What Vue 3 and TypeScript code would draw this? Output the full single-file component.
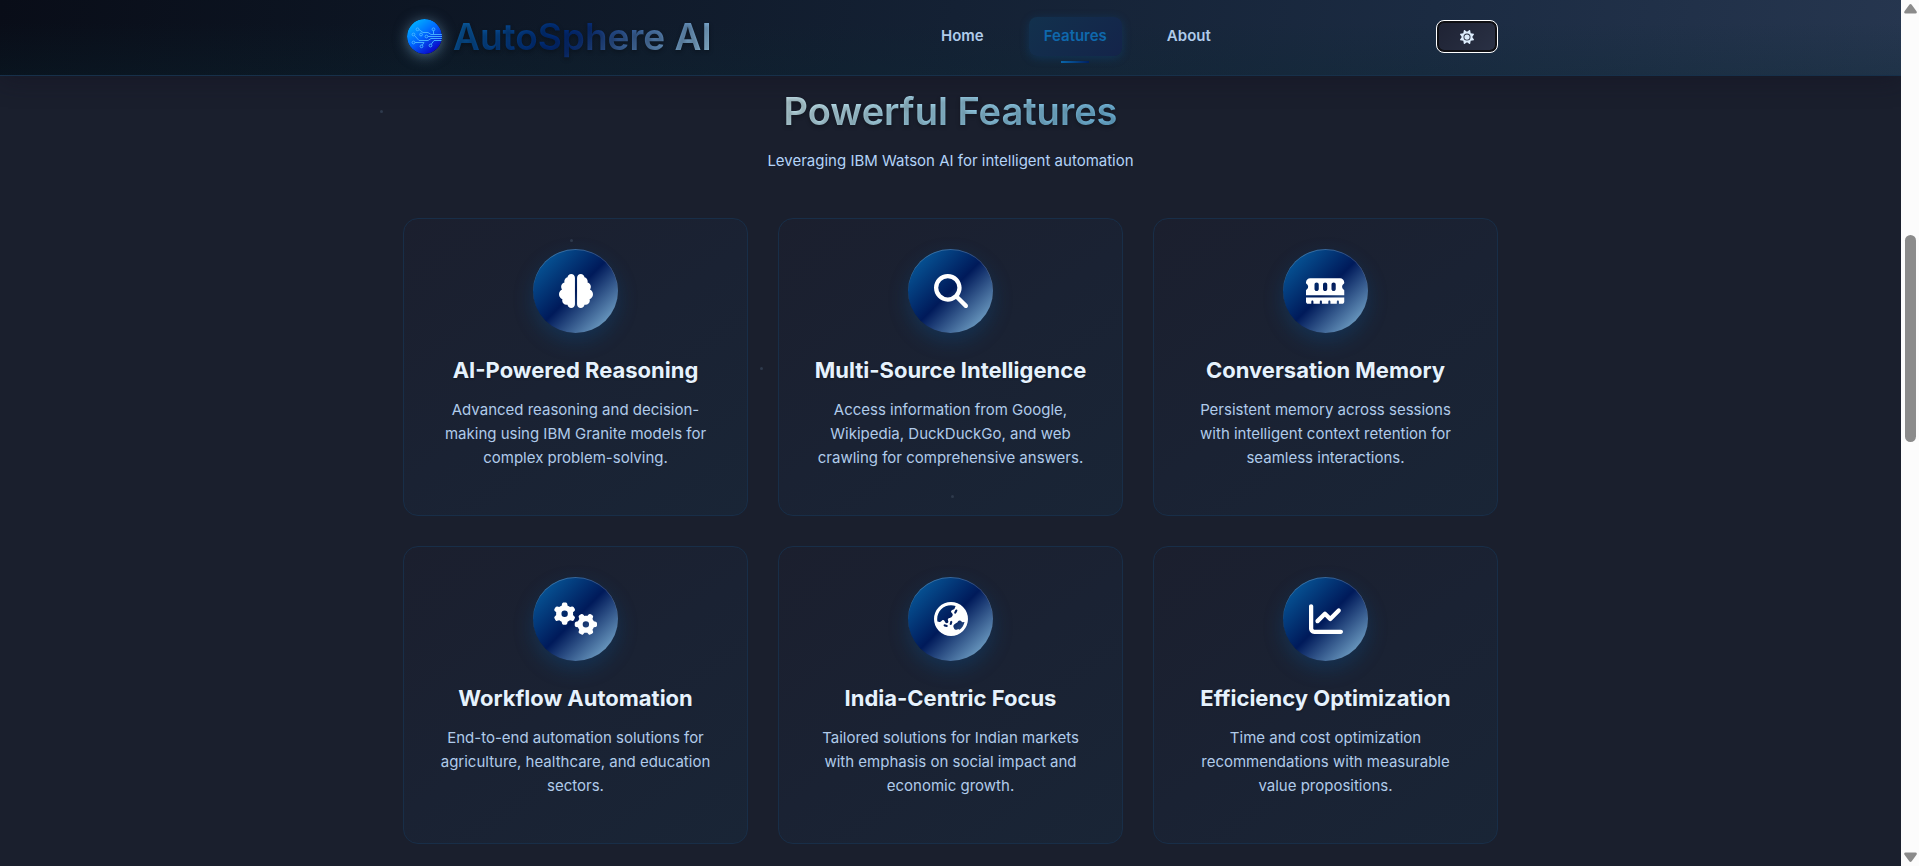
<script setup lang="ts">
import { ref } from 'vue'

interface Shape {
  d: string
  transform?: string
}

interface Feature {
  title: string
  text: string
  viewBox: string
  shapes: Shape[]
}

const gear =
  'M308.5 135.3c7.1-6.3 9.9-16.2 6.2-25c-2.3-5.3-4.8-10.5-7.6-15.5L304 89.4c-3-5-6.3-9.9-9.8-14.6c-5.7-7.6-15.7-10.1-24.7-7.1l-28.2 9.3c-10.7-8.8-23-16-36.2-20.9L199 27.1c-1.9-9.3-9.1-16.7-18.5-17.8C173.9 8.4 167.2 8 160.4 8h-.7c-6.8 0-13.5 .4-20.1 1.2c-9.4 1.1-16.6 8.6-18.5 17.8L115 56.1c-13.3 5-25.5 12.1-36.2 20.9L50.5 67.8c-9-3-19-.5-24.7 7.1c-3.5 4.7-6.8 9.6-9.9 14.6l-3 5.3c-2.8 5-5.3 10.2-7.6 15.6c-3.7 8.7-.9 18.6 6.2 25l22.2 19.8C32.6 161.9 32 168.9 32 176s.6 14.1 1.7 20.9L11.5 216.7c-7.1 6.3-9.9 16.2-6.2 25c2.3 5.3 4.8 10.5 7.6 15.6l3 5.2c3 5.1 6.3 9.9 9.9 14.6c5.7 7.6 15.7 10.1 24.7 7.1l28.2-9.3c10.7 8.8 23 16 36.2 20.9l6.1 29.1c1.9 9.3 9.1 16.7 18.5 17.8c6.7 .8 13.5 1.2 20.4 1.2s13.7-.4 20.4-1.2c9.4-1.1 16.6-8.6 18.5-17.8l6.1-29.1c13.3-5 25.5-12.1 36.2-20.9l28.2 9.3c9 3 19 .5 24.7-7.1c3.5-4.7 6.8-9.5 9.8-14.6l3.1-5.4c2.8-5 5.3-10.2 7.6-15.5c3.7-8.7 .9-18.6-6.2-25l-22.2-19.8c1.1-6.8 1.7-13.8 1.7-20.9s-.6-14.1-1.7-20.9l22.2-19.8zM112 176a48 48 0 1 1 96 0 48 48 0 1 1 -96 0z'

const features: Feature[] = [
  {
    title: 'AI-Powered Reasoning',
    text: 'Advanced reasoning and decision-making using IBM Granite models for complex problem-solving.',
    viewBox: '0 0 512 512',
    shapes: [
      {
        d: 'M184 0c30.9 0 56 25.1 56 56V456c0 30.9-25.1 56-56 56c-28.9 0-52.7-21.9-55.7-50.1c-5.2 1.4-10.7 2.1-16.3 2.1c-35.3 0-64-28.7-64-64c0-7.4 1.3-14.6 3.6-21.2C21.4 367.4 0 338.2 0 304c0-31.9 18.7-59.5 45.8-72.3C37.1 220.8 32 207 32 192c0-30.7 21.6-56.3 50.4-62.6C80.8 123.9 80 118 80 112c0-29.9 20.6-55.1 48.3-62.1C131.3 21.9 155.1 0 184 0zM328 0c28.9 0 52.6 21.9 55.7 49.9c27.8 7 48.3 32.1 48.3 62.1c0 6-.8 11.9-2.4 17.4c28.8 6.2 50.4 31.9 50.4 62.6c0 15-5.1 28.8-13.8 39.7C493.3 244.5 512 272.1 512 304c0 34.2-21.4 63.4-51.6 74.8c2.3 6.6 3.6 13.8 3.6 21.2c0 35.3-28.7 64-64 64c-5.6 0-11.1-.7-16.3-2.1c-3 28.2-26.8 50.1-55.7 50.1c-30.9 0-56-25.1-56-56V56c0-30.9 25.1-56 56-56z',
      },
    ],
  },
  {
    title: 'Multi-Source Intelligence',
    text: 'Access information from Google, Wikipedia, DuckDuckGo, and web crawling for comprehensive answers.',
    viewBox: '0 0 512 512',
    shapes: [
      {
        d: 'M416 208c0 45.9-14.9 88.3-40 122.7L502.6 457.4c12.5 12.5 12.5 32.8 0 45.3s-32.8 12.5-45.3 0L330.7 376c-34.4 25.2-76.8 40-122.7 40C93.1 416 0 322.9 0 208S93.1 0 208 0S416 93.1 416 208zM208 352a144 144 0 1 0 0-288 144 144 0 1 0 0 288z',
      },
    ],
  },
  {
    title: 'Conversation Memory',
    text: 'Persistent memory across sessions with intelligent context retention for seamless interactions.',
    viewBox: '0 0 576 512',
    shapes: [
      {
        d: 'M64 64C28.7 64 0 92.7 0 128v7.4c0 6.8 4.4 12.6 10.1 16.3C23.3 160.3 32 175.1 32 192s-8.7 31.7-21.9 40.3C4.4 236 0 241.8 0 248.6V320H576V248.6c0-6.8-4.4-12.6-10.1-16.3C552.7 223.7 544 208.9 544 192s8.7-31.7 21.9-40.3c5.7-3.7 10.1-9.5 10.1-16.3V128c0-35.3-28.7-64-64-64H64zM576 352H0v64c0 17.7 14.3 32 32 32H80V416c0-8.8 7.2-16 16-16s16 7.2 16 16v32h96V416c0-8.8 7.2-16 16-16s16 7.2 16 16v32h96V416c0-8.8 7.2-16 16-16s16 7.2 16 16v32h96V416c0-8.8 7.2-16 16-16s16 7.2 16 16v32h48c17.7 0 32-14.3 32-32V352zM192 160v64c0 17.7-14.3 32-32 32s-32-14.3-32-32V160c0-17.7 14.3-32 32-32s32 14.3 32 32zm128 0v64c0 17.7-14.3 32-32 32s-32-14.3-32-32V160c0-17.7 14.3-32 32-32s32 14.3 32 32zm128 0v64c0 17.7-14.3 32-32 32s-32-14.3-32-32V160c0-17.7 14.3-32 32-32s32 14.3 32 32z',
      },
    ],
  },
  {
    title: 'Workflow Automation',
    text: 'End-to-end automation solutions for agriculture, healthcare, and education sectors.',
    viewBox: '0 0 640 512',
    shapes: [{ d: gear }, { d: gear, transform: 'translate(480 336) rotate(90) translate(-160 -176)' }],
  },
  {
    title: 'India-Centric Focus',
    text: 'Tailored solutions for Indian markets with emphasis on social impact and economic growth.',
    viewBox: '0 0 512 512',
    shapes: [
      {
        d: 'M51.7 295.1l31.7 6.3c7.9 1.6 16-.9 21.7-6.6l15.4-15.4c11.6-11.6 31.1-8.4 38.4 6.2l9.3 18.5c4.8 9.6 14.6 15.7 25.4 15.7c15.2 0 26.1-14.6 21.7-29.2l-6-19.9c-4.6-15.4 6.9-30.9 23-30.9h2.3c13.4 0 25.9-6.7 33.3-17.8l10.7-16.1c5.6-8.5 5.3-19.6-.8-27.7l-16.1-21.5c-10.3-13.7-3.3-33.5 13.4-37.7l17-4.3c7.5-1.9 13.6-7.2 16.5-14.4l16.4-40.9C303.4 52.1 280.2 48 256 48C141.1 48 48 141.1 48 256c0 13.4 1.3 26.5 3.7 39.1zm407.7 4.6c-3-.3-6-.1-9 .8l-15.8 4.4c-6.7 1.9-13.8-.9-17.5-6.7l-2-3.1c-6-9.4-16.4-15.1-27.6-15.1s-21.6 5.7-27.6 15.1l-6.1 9.5c-1.4 2.2-3.4 4.1-5.7 5.3L312 330.1c-18.1 10.1-25.5 32.4-17 51.3l5.5 12.4c8.6 19.2 30.7 28.5 50.5 21.1l2.6-1c10-3.7 21.3-2.2 29.9 4.1l1.5 1.1c37.2-29.5 64.1-71.4 74.4-119.5zM0 256a256 256 0 1 1 512 0A256 256 0 1 1 0 256zm144.5 92.1c-2.1 8.6 3.1 17.3 11.6 19.4l32 8c8.6 2.1 17.3-3.1 19.4-11.6s-3.1-17.3-11.6-19.4l-32-8c-8.6-2.1-17.3 3.1-19.4 11.6zm92-20c-2.1 8.6 3.1 17.3 11.6 19.4s17.3-3.1 19.4-11.6l8-32c2.1-8.6-3.1-17.3-11.6-19.4s-17.3 3.1-19.4 11.6l-8 32zM343.2 113.7c-7.9-4-17.5-.7-21.5 7.2l-16 32c-4 7.9-.7 17.5 7.2 21.5s17.5 .7 21.5-7.2l16-32c4-7.9 .7-17.5-7.2-21.5z',
      },
    ],
  },
  {
    title: 'Efficiency Optimization',
    text: 'Time and cost optimization recommendations with measurable value propositions.',
    viewBox: '0 0 512 512',
    shapes: [
      {
        d: 'M64 64c0-17.7-14.3-32-32-32S0 46.3 0 64V400c0 44.2 35.8 80 80 80H480c17.7 0 32-14.3 32-32s-14.3-32-32-32H80c-8.8 0-16-7.2-16-16V64zm406.6 86.6c12.5-12.5 12.5-32.8 0-45.3s-32.8-12.5-45.3 0L320 210.7l-57.4-57.4c-12.5-12.5-32.8-12.5-45.3 0l-112 112c-12.5 12.5-12.5 32.8 0 45.3s32.8 12.5 45.3 0L240 221.3l57.4 57.4c12.5 12.5 32.8 12.5 45.3 0l128-128z',
      },
    ],
  },
]

const links = ['Home', 'Features', 'About']
const active = ref('Features')
</script>

<template>
  <div class="window">
    <div class="page">
      <header class="header">
        <div class="container bar">
          <a class="brand" href="#home">
            <svg class="logo" viewBox="0 0 35 35" aria-hidden="true">
              <defs>
                <linearGradient id="orb" x1="0.15" y1="0.1" x2="0.8" y2="0.95">
                  <stop offset="0" stop-color="#00b0ff" />
                  <stop offset="0.45" stop-color="#0068ff" />
                  <stop offset="1" stop-color="#0b00c4" />
                </linearGradient>
              </defs>
              <circle cx="17.5" cy="17.5" r="17.5" fill="url(#orb)" />
              <g fill="none" stroke="#49b8ff" stroke-width="0.9">
                <path d="M35 15.5H24L21 13.5H16L12 10.5M35 17.5H21M35 19.5H24L21 21.5H12L7.5 16.5M35 21.5H27L24 25.5M8 23.5H17L15 26.5M26.5 11.5V15" />
                <circle cx="10.5" cy="10.3" r="1.4" />
                <circle cx="6.5" cy="15.5" r="1.4" />
                <circle cx="14" cy="15.5" r="1.4" />
                <circle cx="19.5" cy="17.5" r="1.4" />
                <circle cx="6.5" cy="23.5" r="1.4" />
                <circle cx="14.5" cy="27.3" r="1.4" />
                <circle cx="23.5" cy="26.5" r="1.4" />
                <circle cx="26.5" cy="10.3" r="1.4" />
              </g>
            </svg>
            <span class="brand-name">AutoSphere AI</span>
          </a>
          <nav class="nav" aria-label="Main">
            <a
              v-for="link in links"
              :key="link"
              class="nav-link"
              :class="{ active: active === link }"
              :href="'#' + link.toLowerCase()"
              @click="active = link"
              >{{ link }}</a
            >
          </nav>
          <button class="theme" type="button" aria-label="Toggle theme">
            <svg viewBox="0 0 512 512" aria-hidden="true">
              <path
                d="M361.5 1.2c5 2.1 8.6 6.6 9.6 11.9L391 121l107.9 19.8c5.3 1 9.8 4.6 11.9 9.6s1.5 10.7-1.6 15.2L446.9 256l62.3 90.3c3.1 4.5 3.7 10.2 1.6 15.2s-6.6 8.6-11.9 9.6L391 391 371.1 498.9c-1 5.3-4.6 9.8-9.6 11.9s-10.7 1.5-15.2-1.6L256 446.9l-90.3 62.3c-4.5 3.1-10.2 3.7-15.2 1.6s-8.6-6.6-9.6-11.9L121 391 13.1 371.1c-5.3-1-9.8-4.6-11.9-9.6s-1.5-10.7 1.6-15.2L65.1 256 2.8 165.7c-3.1-4.5-3.7-10.2-1.6-15.2s6.6-8.6 11.9-9.6L121 121 140.9 13.1c1-5.3 4.6-9.8 9.6-11.9s10.7-1.5 15.2 1.6L256 65.1 346.3 2.8c4.5-3.1 10.2-3.7 15.2-1.6zM160 256a96 96 0 1 1 192 0 96 96 0 1 1 -192 0zm224 0a128 128 0 1 0 -256 0 128 128 0 1 0 256 0z"
              />
            </svg>
          </button>
        </div>
      </header>

      <main class="container main">
        <h2 class="heading">Powerful Features</h2>
        <p class="lead">Leveraging IBM Watson AI for intelligent automation</p>
        <section class="grid">
          <article v-for="feature in features" :key="feature.title" class="card">
            <div class="badge">
              <svg :viewBox="feature.viewBox" aria-hidden="true">
                <path
                  v-for="(shape, i) in feature.shapes"
                  :key="i"
                  :d="shape.d"
                  :transform="shape.transform"
                  fill-rule="evenodd"
                />
              </svg>
            </div>
            <h3>{{ feature.title }}</h3>
            <p>{{ feature.text }}</p>
          </article>
        </section>
      </main>

      <i class="particle p1"></i>
      <i class="particle p2"></i>
      <i class="particle p3"></i>
      <i class="particle p4"></i>
    </div>

    <div class="scrollbar" aria-hidden="true">
      <svg viewBox="0 0 13 10"><path d="M5.3 .8q1.2-1.4 2.4 0l4.8 6.4q1 2.3-1.2 2.3H1.7q-2.2 0-1.2-2.3z" /></svg>
      <div class="track">
        <div class="thumb"></div>
      </div>
      <svg viewBox="0 0 13 10"><path d="M5.3 9.2q1.2 1.4 2.4 0l4.8-6.4q1-2.3-1.2-2.3H1.7Q-.5 .5 .5 2.8z" /></svg>
    </div>
  </div>
</template>

<style>
body {
  margin: 0;
  background: #1a1f2d;
}
</style>

<style scoped>
* {
  box-sizing: border-box;
}

.window {
  display: flex;
  height: 100vh;
  overflow: hidden;
  font-family: Inter, 'Liberation Sans', sans-serif;
  font-size: 15px;
  line-height: 24px;
}

.page {
  position: relative;
  flex: 1;
  overflow: hidden;
  background: #1a1f2d;
}

.container {
  width: 100%;
  max-width: 1125px;
  margin: 0 auto;
  padding: 0 15px;
}

.header {
  position: relative;
  border-bottom: 1px solid #17304a;
  background:
    linear-gradient(180deg, transparent 30%, rgba(10, 40, 50, 0.25)),
    linear-gradient(100deg, #090d18 0%, #0d1624 22%, #142134 50%, #1b2b42 75%, #26364f 100%);
  box-shadow: 0 4px 24px rgba(20, 16, 30, 0.45);
}

.bar {
  display: flex;
  align-items: center;
  justify-content: space-between;
  height: 75px;
  padding-bottom: 2px;
}

.brand {
  display: flex;
  align-items: center;
  gap: 11px;
  padding: 0 4px;
  text-decoration: none;
}

.logo {
  width: 35px;
  height: 35px;
  border-radius: 50%;
  box-shadow: 0 2px 14px rgba(135, 190, 225, 0.5);
}

.brand-name {
  font-size: 37px;
  line-height: 48px;
  font-weight: 600;
  background: linear-gradient(135deg, #0b64a8 0%, #002a78 42%, #0a2f78 50%, #a6d8f2 100%);
  background-clip: text;
  color: transparent;
  text-shadow: 0 2px 4px rgba(0, 0, 0, 0.3);
}

.nav {
  display: flex;
  gap: 30px;
}

.nav-link {
  position: relative;
  padding: 7px 15px 8px;
  border-radius: 8px;
  color: #b0cbea;
  font-weight: 600;
  text-decoration: none;
}

.nav-link.active {
  color: #0f68ad;
  background: linear-gradient(135deg, #12314d, #14244a);
  box-shadow: 0 2px 10px rgba(10, 90, 160, 0.3);
}

.nav-link.active::after {
  content: '';
  position: absolute;
  left: 35%;
  bottom: -7px;
  width: 30%;
  height: 2px;
  background: linear-gradient(90deg, #0a66aa, #001f60);
}

.theme {
  display: grid;
  place-items: center;
  width: 62px;
  height: 33px;
  padding: 0;
  border: 1px solid #ffffff;
  border-radius: 8px;
  background: linear-gradient(135deg, #1e2233, #2a3145);
  box-shadow: inset 0 0 0 2px #101014;
}

.theme svg {
  width: 14px;
  height: 14px;
  fill: #dcecfc;
}

.main {
  padding-top: 12px;
  text-align: center;
}

.heading {
  width: fit-content;
  margin: 0 auto;
  font-size: 38px;
  line-height: 46px;
  font-weight: 600;
  background: linear-gradient(135deg, #cdebf2 0%, #9bd2ea 50%, #6db6df 100%);
  background-clip: text;
  color: transparent;
  text-shadow: 0 2px 4px rgba(0, 0, 0, 0.3);
}

.lead {
  margin: 15px 0 45px;
  color: #b3d3f8;
}

.grid {
  display: grid;
  grid-template-columns: repeat(3, 1fr);
  gap: 30px;
}

.card {
  display: flex;
  flex-direction: column;
  align-items: center;
  padding: 30px 30px 45px;
  border: 1px solid #182e48;
  border-radius: 15px;
  background: linear-gradient(145deg, #1b1f2e 0%, #1a2233 50%, #192536 100%);
}

.badge {
  display: grid;
  place-items: center;
  width: 85px;
  height: 84px;
  border-radius: 50%;
  background: linear-gradient(135deg, #0866a8 0%, #001a5a 50%, #8ec4e2 100%);
  box-shadow:
    0 8px 20px rgba(10, 90, 160, 0.3),
    inset 0 1px 0 rgba(255, 255, 255, 0.2);
}

.badge svg {
  height: 34px;
  fill: #ffffff;
}

.card h3 {
  margin: 20px 0 11px;
  color: #e6f2fd;
  font-size: 22px;
  line-height: 34px;
  font-weight: 700;
  text-shadow: 0 1px 2px rgba(0, 0, 0, 0.3);
}

.card p {
  margin: 0;
  color: #b0cbea;
}

.particle {
  position: absolute;
  width: 3px;
  height: 3px;
  border-radius: 50%;
  background: #2e3a4c;
}

.p1 {
  left: 20%;
  top: 110px;
}

.p2 {
  left: 30%;
  top: 239px;
}

.p3 {
  left: 40%;
  top: 367px;
}

.p4 {
  left: 50%;
  top: 495px;
}

.scrollbar {
  display: flex;
  flex-direction: column;
  align-items: center;
  width: 18px;
  padding: 4px 0;
  background: #fcfcfc;
}

.scrollbar svg {
  width: 13px;
  height: 10px;
  fill: #8b8b8b;
}

.track {
  display: grid;
  flex: 1;
  grid-template-rows: 221fr 207fr 410fr;
}

.thumb {
  grid-row: 2;
  width: 11px;
  border-radius: 6px;
  background: #8b8b8b;
}
</style>
